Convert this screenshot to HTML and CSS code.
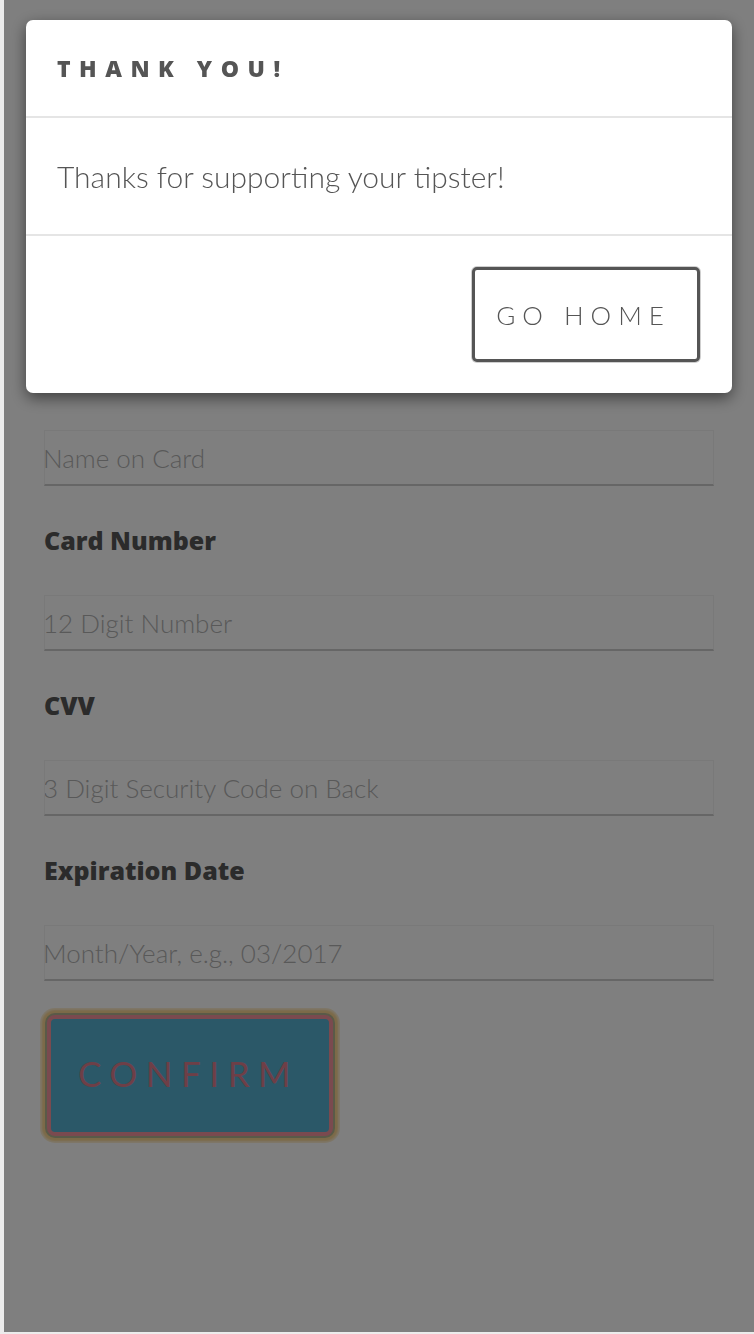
FILE: index.html
```html
<!DOCTYPE html>
<html>
<head>
<meta charset="utf-8">
<link rel="stylesheet" href="styles.css">
</head>
<body>
<div class="page">
  <form class="pay-form">
    <input class="field" type="text" placeholder="Name on Card">
    <label class="label">Card Number</label>
    <input class="field" type="text" placeholder="12 Digit Number">
    <label class="label">CVV</label>
    <input class="field" type="text" placeholder="3 Digit Security Code on Back">
    <label class="label">Expiration Date</label>
    <input class="field" type="text" placeholder="Month/Year, e.g., 03/2017">
    <div class="actions"><button type="button" class="confirm">CONFIRM</button></div>
  </form>
</div>
<div class="overlay">
  <div class="modal">
    <div class="modal-header">THANK YOU!</div>
    <div class="modal-body">Thanks for supporting your tipster!</div>
    <div class="modal-footer"><button type="button" class="home">GO HOME</button></div>
  </div>
</div>
</body>
</html>
```
FILE: styles.css
```css
html, body {
  margin: 0;
  padding: 0;
}
body {
  background: #ececec;
  font-family: Lato, "Liberation Sans", sans-serif;
  height: 1334px;
  overflow: hidden;
}
.page {
  margin-left: 4px;
  height: 1332px;
  background: #ffffff;
  box-sizing: border-box;
  padding: 430px 40px 0 40px;
}
.pay-form {
  display: flex;
  flex-direction: column;
}
.field {
  height: 56px;
  box-sizing: border-box;
  border: 1px solid #f2f2f2;
  border-bottom: 2px solid #cccccc;
  padding: 0;
  text-indent: -2px;
  font-family: inherit;
  font-weight: 300;
  font-size: 26px;
  background: #fff;
}
.field::placeholder {
  color: #b2b2b2;
}
.label {
  font-family: "Open Sans", Lato, sans-serif;
  font-weight: 800;
  font-size: 25px;
  color: #565656;
  line-height: 32px;
  margin: 38px 0 39px;
}
.actions {
  margin-top: 34px;
  display: flex;
}
.confirm {
  margin-left: 3px;
  width: 286px;
  height: 121px;
  background: #56b0d0;
  border: 4px solid #f4949f;
  border-radius: 8px;
  box-shadow: 0 0 0 2px #b4b490, 0 0 2px 5px #f8d490, 0 0 0 7px rgba(248, 212, 144, 0.4);
  color: #dc7e8e;
  font-family: inherit;
  font-weight: 400;
  font-size: 35px;
  letter-spacing: 8.5px;
  padding: 0 3px 5px 0;
}
.overlay {
  position: fixed;
  left: 4px;
  top: 0;
  right: 0;
  bottom: 2px;
  background: rgba(0, 0, 0, 0.5);
  padding: 20px 22px 0 22px;
}
.modal {
  background: #fff;
  border-radius: 7px;
  box-shadow: 0 5px 15px rgba(0, 0, 0, 0.5);
  display: flex;
  flex-direction: column;
}
.modal-header {
  height: 98px;
  box-sizing: border-box;
  padding: 0 31px;
  display: flex;
  align-items: center;
  border-bottom: 2px solid #e5e5e5;
  font-family: "Open Sans", Lato, sans-serif;
  font-weight: 800;
  font-size: 23px;
  letter-spacing: 8.5px;
  color: #555555;
}
.modal-body {
  height: 118px;
  box-sizing: border-box;
  padding: 0 31px;
  display: flex;
  align-items: center;
  border-bottom: 2px solid #e5e5e5;
  font-weight: 300;
  font-size: 30px;
  color: #555555;
}
.modal-footer {
  padding: 31px 32px 31px;
  display: flex;
  justify-content: flex-end;
}
.home {
  width: 228px;
  height: 95px;
  background: #fff;
  border: 3px solid #555555;
  border-radius: 5px;
  box-shadow: 0 0 0 1px #cfcfcf;
  color: #555555;
  font-family: inherit;
  font-weight: 300;
  font-size: 26px;
  letter-spacing: 7px;
  padding: 0 5px 0 0;
}
```
